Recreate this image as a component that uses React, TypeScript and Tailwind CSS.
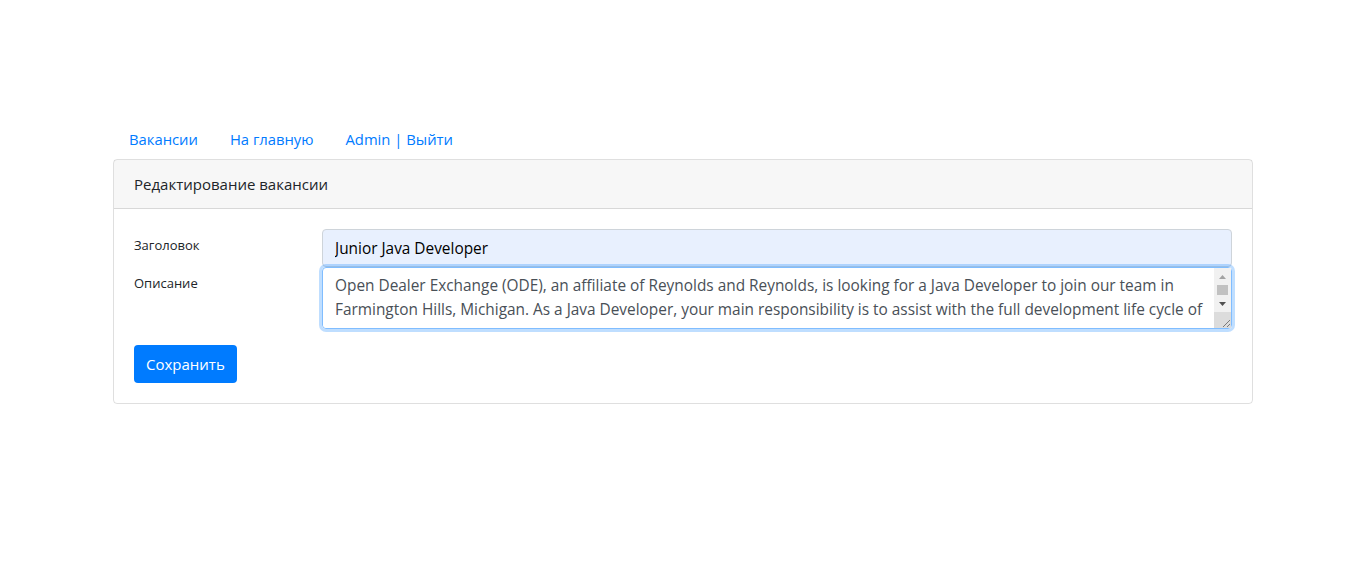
const desc =
  "Open Dealer Exchange (ODE), an affiliate of Reynolds and Reynolds, is looking for a Java Developer to join our team in Farmington Hills, Michigan. As a Java Developer, your main responsibility is to assist with the full development life cycle of our software products. You will work closely with other developers, QA and product owners to design, build and maintain high quality applications.";

function FakeScrollbar() {
  return (
    <div className="pointer-events-none absolute right-[1px] top-[1px] bottom-[1px] flex w-[17px] flex-col bg-[#f1f1f1]">
      <div className="flex h-[17px] items-center justify-center">
        <svg width="7" height="4" viewBox="0 0 7 4"><path d="M0 4 L3.5 0 L7 4 Z" fill="#a3a3a3" /></svg>
      </div>
      <div className="mx-[3px] h-[10px] bg-[#c1c1c1]" />
      <div className="flex h-[17px] items-center justify-center">
        <svg width="7" height="4" viewBox="0 0 7 4"><path d="M0 0 L7 0 L3.5 4 Z" fill="#505050" /></svg>
      </div>
      <div className="flex flex-1 items-end justify-end bg-[#dcdcdc] pb-[1px] pr-[1px]">
        <svg width="8" height="8" viewBox="0 0 8 8">
          <path d="M8 1 L1 8 M8 5 L5 8" stroke="#7a7a7a" strokeWidth="1" />
        </svg>
      </div>
    </div>
  );
}

export default function App() {
  return (
    <div className="min-h-[586px] bg-white text-[#212529] font-['Open_Sans','Noto_Sans',sans-serif]">
      <div className="mx-auto w-[1140px] pt-[119px]">
        <nav className="flex text-[14.8px] leading-6 text-[#007bff]">
          <a href="#" className="px-4 py-2">Вакансии</a>
          <a href="#" className="px-4 py-2">На главную</a>
          <a href="#" className="px-4 py-2">Admin | Выйти</a>
        </nav>
        <div className="rounded border border-black/[.125]">
          <div className="border-b border-black/[.125] bg-black/[.03] px-5 py-3 text-[15px] leading-6">
            Редактирование вакансии
          </div>
          <div className="p-5">
            <form className="flex flex-col">
              <div className="flex">
                <label className="w-[188px] shrink-0 pt-[4px] text-[13px] leading-6">Заголовок</label>
                <input
                  className="h-[38px] flex-1 rounded border border-[#ced4da] bg-[#e8f0fe] px-3 text-[15.4px] text-black outline-none"
                  defaultValue="Junior Java Developer"
                />
              </div>
              <div className="flex">
                <label className="w-[188px] shrink-0 pt-[4px] text-[13px] leading-6">Описание</label>
                <div className="relative flex-1">
                  <textarea
                    rows={2}
                    className="block h-[62px] w-full resize-none rounded border border-[#80bdff] pl-3 pr-[18px] py-[6px] text-[15.4px] leading-6 text-[#495057] shadow-[0_0_0_3px_rgba(0,123,255,0.25)] outline-none"
                    defaultValue={desc}
                  />
                  <div className="pointer-events-none absolute bottom-[1px] left-[1px] right-[18px] h-[6px] rounded-bl bg-white" />
                  <FakeScrollbar />
                </div>
              </div>
              <div className="mt-4">
                <button type="button" className="h-[38px] rounded bg-[#007bff] px-3 text-[15px] text-white">
                  Сохранить
                </button>
              </div>
            </form>
          </div>
        </div>
      </div>
    </div>
  );
}
